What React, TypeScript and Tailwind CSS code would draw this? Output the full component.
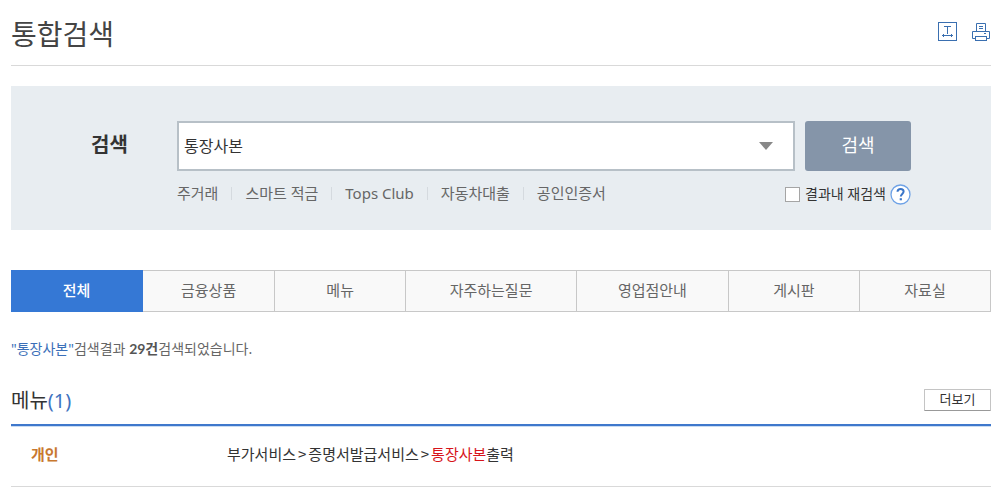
import { useState } from 'react';

const keywords = ['주거래', '스마트 적금', 'Tops Club', '자동차대출', '공인인증서'];

const tabs = [
  { label: '전체', size: 'flex-[132]' },
  { label: '금융상품', size: 'flex-[132]' },
  { label: '메뉴', size: 'flex-[131]' },
  { label: '자주하는질문', size: 'flex-[171]' },
  { label: '영업점안내', size: 'flex-[152]' },
  { label: '게시판', size: 'flex-[131]' },
  { label: '자료실', size: 'flex-[131]' },
];

const TextSizeIcon = () => (
  <svg width="19" height="19" viewBox="0 0 19 19" fill="none" stroke="#3a6fb0" aria-hidden="true">
    <rect x="0.5" y="0.5" width="18" height="18" />
    <path d="M6 4.5h7M9.5 4.5v7.5M4 13.5h11M5.5 12v3M13.5 12v3" />
  </svg>
);

const PrintIcon = () => (
  <svg width="18" height="18" viewBox="0 0 18 18" fill="none" stroke="#3a6fb0" aria-hidden="true">
    <path d="M4.5 8V0.5h9V8M7 3.5h4M7 5.5h4M3.5 15.5h-3v-7h17v7h-3M12 10.5h2" />
    <rect x="3.5" y="13.5" width="11" height="4" />
  </svg>
);

const SearchPanel = () => {
  const [query, setQuery] = useState('통장사본');

  return (
    <form className="mt-5 flex bg-[#e8edf1] px-20 pt-[35px] pb-[25px]" onSubmit={(e) => e.preventDefault()}>
      <label htmlFor="query" className="w-[86px] shrink-0 text-xl leading-[48px] font-bold text-[#333]">
        검색
      </label>
      <div className="min-w-0 flex-1">
        <div className="flex gap-[10px]">
          <div className="flex h-[50px] min-w-0 flex-1 items-center border-2 border-[#b7c0c7] bg-white">
            <input
              id="query"
              type="text"
              value={query}
              onChange={(e) => setQuery(e.target.value)}
              className="h-full min-w-0 flex-1 px-[5px] pb-[2px] text-base text-[#333] outline-none"
            />
            <button type="button" aria-label="자동완성 열기" className="px-5">
              <svg width="14" height="8" viewBox="0 0 14 8" fill="#888">
                <path d="M0 0h14L7 8z" />
              </svg>
            </button>
          </div>
          <button type="submit" className="h-[50px] w-[106px] rounded-[3px] bg-[#8595a9] pb-[2px] text-lg text-white">
            검색
          </button>
        </div>
        <div className="mt-3 flex items-start justify-between">
          <ul className="flex text-[15px] leading-5 text-[#666]">
            {keywords.map((word) => (
              <li key={word} className="group flex items-center">
                <span className="mx-[13px] h-[13px] w-px bg-[#d5dadf] group-first:hidden" />
                <a href="#">{word}</a>
              </li>
            ))}
          </ul>
          <div className="flex items-center">
            <input
              id="again"
              type="checkbox"
              className="h-[15px] w-[15px] appearance-none border border-[#a5a5a5] bg-white checked:bg-[#3578d5]"
            />
            <label htmlFor="again" className="ml-[5px] text-sm leading-[22px] text-[#333]">
              결과내 재검색
            </label>
            <button type="button" aria-label="도움말" className="ml-1">
              <svg width="21" height="21" viewBox="0 0 21 21" fill="none">
                <circle cx="10.5" cy="10.5" r="9.5" fill="#fff" stroke="#6ea2e6" strokeWidth="1.3" />
                <path
                  d="M7.5 7.8C7.6 6 8.8 5 10.6 5c1.8 0 3 1 3 2.6 0 2.2-2.8 2.5-2.8 4.9"
                  stroke="#3a75c8"
                  strokeWidth="2"
                />
                <path d="M9.7 14.2h2.2v2.1H9.7z" fill="#3a75c8" />
              </svg>
            </button>
          </div>
        </div>
      </div>
    </form>
  );
};

const ResultTabs = () => {
  const [active, setActive] = useState(0);

  return (
    <nav className="mt-10 flex h-[42px] text-[15px]">
      {tabs.map((tab, index) => (
        <button
          key={tab.label}
          type="button"
          onClick={() => setActive(index)}
          className={`${tab.size} border-y border-r pb-px ${
            active === index
              ? 'border-[#3578d5] bg-[#3578d5] font-medium text-white'
              : 'border-[#c8c8c8] bg-[#f9f9f9] text-[#666]'
          }`}
        >
          {tab.label}
        </button>
      ))}
    </nav>
  );
};

const App = () => {
  return (
    <main className="bg-white pr-[13px] pb-3 pl-[11px] font-['Noto_Sans','Noto_Sans_CJK_KR',sans-serif] text-[#333]">
      <header className="flex h-[66px] items-start justify-between border-b border-[#d9d9d9] pt-[14px]">
        <h1 className="text-[28px] leading-10 text-[#444]">통합검색</h1>
        <div className="flex items-end gap-[15px] pt-2 pr-px">
          <button type="button" aria-label="글자 크기">
            <TextSizeIcon />
          </button>
          <button type="button" aria-label="인쇄">
            <PrintIcon />
          </button>
        </div>
      </header>

      <SearchPanel />
      <ResultTabs />

      <p className="mt-[26px] text-sm leading-[22px] text-[#666]">
        <span className="text-[#3a6fb8]">"통장사본"</span>검색결과{' '}
        <strong className="font-['Lato','Noto_Sans_CJK_KR',sans-serif] text-[#555]">29건</strong>
        검색되었습니다.
      </p>

      <section className="mt-[27px]">
        <div className="flex items-start justify-between pb-[9px]">
          <h2 className="text-xl leading-7">
            메뉴<span className="text-[#3f73c0]">(1)</span>
          </h2>
          <button
            type="button"
            className="mt-[2px] h-[22px] w-[67px] rounded-[1px] border border-[#c4c4c4] border-b-[#999] pb-[2px] text-[13px] leading-[18px]"
          >
            더보기
          </button>
        </div>
        <div className="border-t-2 border-[#3f78cc] shadow-[inset_0_1px_#c9dcf3]">
          <table className="w-full text-left text-[15px] leading-[22px]">
            <tbody>
              <tr className="border-b border-[#d9d9d9]">
                <th scope="row" className="w-[216px] pt-[17px] pb-[21px] pl-5 font-bold text-[#c8782f]">
                  개인
                </th>
                <td className="pt-[17px] pb-[21px] font-['Noto_Sans_CJK_KR',sans-serif]">
                  <a href="#" className="flex gap-[2px]">
                    <span>부가서비스</span>
                    <span>&gt;</span>
                    <span>증명서발급서비스</span>
                    <span>&gt;</span>
                    <span>
                      <span className="text-[#d7141a]">통장사본</span>출력
                    </span>
                  </a>
                </td>
              </tr>
            </tbody>
          </table>
        </div>
      </section>
    </main>
  );
};

export default App;
